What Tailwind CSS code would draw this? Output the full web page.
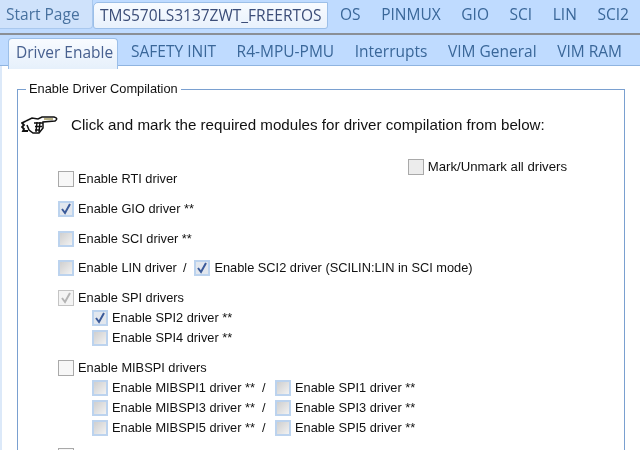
<!DOCTYPE html>
<html lang="en">
<head>
  <meta charset="UTF-8" />
  <title>HALCoGen</title>
  <script src="https://cdn.jsdelivr.net/npm/@tailwindcss/browser@4"></script>
</head>
<body class="bg-white w-[640px] h-[450px] overflow-hidden font-['Liberation_Sans',sans-serif] text-[12.8px] text-[#111] blur-[0.3px]">

  <!-- Main tabs -->
  <div class="h-[35px] bg-[#bfdbff] border-b-[2px] border-[#8a8f96] flex items-start font-['Open_Sans',sans-serif] text-[15.5px] text-[#3a6799]">
    <div class="h-[29px] w-[93px] pl-[6px] leading-[28px] bg-[#cfe2fb] rounded-br-[4px] border-r border-b border-[#a9c8ee] text-[#47719f]">Start Page</div>
    <div class="h-[27px] w-[235px] mt-[2px] pl-[6px] leading-[25px] bg-gradient-to-b from-[#f8fbff] to-[#e8f1fc] border border-[#9cbfe8] rounded-tl-[5px] rounded-b-[3px] text-[#3b4d78]">TMS570LS3137ZWT_FREERTOS</div>
    <div class="flex gap-[20.6px] pl-[12px] pt-[2px] leading-[25px]">
      <span>OS</span><span>PINMUX</span><span>GIO</span><span>SCI</span><span>LIN</span><span>SCI2</span>
    </div>
  </div>

  <!-- Sub tabs -->
  <div class="h-[31px] bg-[#bfdbff] border-b border-[#8fb4e0] flex items-start pl-[8px] font-['Open_Sans',sans-serif] text-[15.5px] text-[#3a6799]">
    <div class="h-[31px] w-[110px] mt-[3px] pl-[7px] leading-[26px] bg-gradient-to-b from-[#f8fbff] to-[#e6f0fb] border border-b-0 border-[#9cbfe8] rounded-t-[4px] text-[#47608f]">Driver Enable</div>
    <div class="flex gap-[20.6px] pl-[13px] pt-[3px] leading-[27px]">
      <span>SAFETY INIT</span><span>R4-MPU-PMU</span><span>Interrupts</span><span>VIM General</span><span>VIM RAM</span>
    </div>
  </div>

  <!-- Panel -->
  <div class="pl-[2px] pt-[16px] border-l-[2px] border-[#dce9f9]">
    <fieldset class="ml-[13px] w-[608px] min-w-0 h-[368px] overflow-hidden border border-[#7aa0d0] border-b-0 pl-[3px]">
      <legend class="ml-[5px] px-[3px] leading-[14px]">Enable Driver Compilation</legend>

      <div class="flex items-center h-[22px] mt-[18px]">
        <svg class="w-[38px] h-[18px]" viewBox="0 0 38 18" fill="none" stroke="#111">
          <!-- cuff -->
          <path d="M5 5 L1 7 L3 9 L1 11 L3 13 L2 15 L7 15" stroke-width="1.8"/>
          <!-- palm and index finger -->
          <path d="M5 5 L11 2 L17 3 L21 1 H33 Q38 2.5 34 5 L22 6 L22 12 L18 17 L12 17 L8 14 L6 9" fill="#fff" stroke-width="1.5"/>
          <!-- fingers -->
          <path d="M13 7 H22 M14 10.5 H21 M14 14 H19 M16 6 L15 16 M19 6 L18 16" stroke-width="1.4"/>
          <path d="M23 3 H32" stroke="#a89f6a" stroke-width="1.6"/>
        </svg>
        <span class="ml-[12px] text-[15.15px] whitespace-nowrap">Click and mark the required modules for driver compilation from below:</span>
      </div>

      <div class="flex justify-between pr-[57px]">
        <div class="flex-1 min-w-0 pl-[37px] pt-[33px]">
          <label class="flex items-center h-[20px]">
            <span class="w-[16px] h-[16px] border border-[#a9a9a9] bg-[#f7f7f7] mr-[4px]"></span>Enable RTI driver
          </label>
          <label class="flex items-center h-[20px] mt-[10px]">
            <span class="w-[16px] h-[16px] border-2 border-[#bcd3ee] bg-[#e2e7ee] mr-[4px] flex items-center justify-center">
              <svg class="w-[12px] h-[12px] shrink-0" viewBox="0 0 12 12" fill="none" stroke="#3a5a9a" stroke-width="2"><path d="M2 6 L5 10 L10 1"/></svg>
            </span>Enable GIO driver **
          </label>
          <label class="flex items-center h-[20px] mt-[9.5px]">
            <span class="w-[16px] h-[16px] border-2 border-[#bcd3ee] bg-gradient-to-br from-[#cfcfcf] to-[#f2f2f2] mr-[4px]"></span>Enable SCI driver **
          </label>
          <div class="flex items-center h-[20px] mt-[9.5px] w-max whitespace-nowrap">
            <span class="shrink-0 w-[16px] h-[16px] border-2 border-[#bcd3ee] bg-gradient-to-br from-[#cfcfcf] to-[#f2f2f2] mr-[4px]"></span>Enable LIN driver
            <span class="ml-[6px]">/</span>
            <span class="shrink-0 w-[16px] h-[16px] ml-[8px] border-2 border-[#bcd3ee] bg-[#e2e7ee] mr-[4px] flex items-center justify-center">
              <svg class="w-[12px] h-[12px] shrink-0" viewBox="0 0 12 12" fill="none" stroke="#3a5a9a" stroke-width="2"><path d="M2 6 L5 10 L10 1"/></svg>
            </span>Enable SCI2 driver (SCILIN:LIN in SCI mode)
          </div>
          <label class="flex items-center h-[20px] mt-[10px]">
            <span class="w-[16px] h-[16px] border border-[#c4c4c4] bg-[#f4f4f4] mr-[4px] flex items-center justify-center">
              <svg class="w-[12px] h-[12px] shrink-0" viewBox="0 0 12 12" fill="none" stroke="#b4b4b4" stroke-width="2"><path d="M2 6 L5 10 L10 1"/></svg>
            </span>Enable SPI drivers
          </label>
          <div class="pl-[34px]">
            <label class="flex items-center h-[20px]">
              <span class="w-[16px] h-[16px] border-2 border-[#bcd3ee] bg-[#e2e7ee] mr-[4px] flex items-center justify-center">
                <svg class="w-[12px] h-[12px] shrink-0" viewBox="0 0 12 12" fill="none" stroke="#3a5a9a" stroke-width="2"><path d="M2 6 L5 10 L10 1"/></svg>
              </span>Enable SPI2 driver **
            </label>
            <label class="flex items-center h-[20px]">
              <span class="w-[16px] h-[16px] border-2 border-[#bcd3ee] bg-gradient-to-br from-[#cfcfcf] to-[#f2f2f2] mr-[4px]"></span>Enable SPI4 driver **
            </label>
          </div>
          <label class="flex items-center h-[20px] mt-[10px]">
            <span class="w-[16px] h-[16px] border border-[#a9a9a9] bg-[#f7f7f7] mr-[4px]"></span>Enable MIBSPI drivers
          </label>
          <div class="pl-[34px]">
            <div class="grid grid-cols-[183px_auto] w-[340px]">
              <div class="flex items-center h-[20px] whitespace-pre"><span class="w-[16px] h-[16px] border-2 border-[#bcd3ee] bg-gradient-to-br from-[#cfcfcf] to-[#f2f2f2] mr-[4px]"></span>Enable MIBSPI1 driver **  /</div>
              <div class="flex items-center h-[20px]"><span class="w-[16px] h-[16px] border-2 border-[#bcd3ee] bg-gradient-to-br from-[#cfcfcf] to-[#f2f2f2] mr-[4px]"></span>Enable SPI1 driver **</div>
              <div class="flex items-center h-[20px] whitespace-pre"><span class="w-[16px] h-[16px] border-2 border-[#bcd3ee] bg-gradient-to-br from-[#cfcfcf] to-[#f2f2f2] mr-[4px]"></span>Enable MIBSPI3 driver **  /</div>
              <div class="flex items-center h-[20px]"><span class="w-[16px] h-[16px] border-2 border-[#bcd3ee] bg-gradient-to-br from-[#cfcfcf] to-[#f2f2f2] mr-[4px]"></span>Enable SPI3 driver **</div>
              <div class="flex items-center h-[20px] whitespace-pre"><span class="w-[16px] h-[16px] border-2 border-[#bcd3ee] bg-gradient-to-br from-[#cfcfcf] to-[#f2f2f2] mr-[4px]"></span>Enable MIBSPI5 driver **  /</div>
              <div class="flex items-center h-[20px]"><span class="w-[16px] h-[16px] border-2 border-[#bcd3ee] bg-gradient-to-br from-[#cfcfcf] to-[#f2f2f2] mr-[4px]"></span>Enable SPI5 driver **</div>
            </div>
          </div>
          <div class="mt-[10px] w-[16px] h-[16px] border border-[#a9a9a9] bg-[#f7f7f7]"></div>
        </div>
        <label class="flex items-center h-[20px] mt-[21px] whitespace-nowrap text-[13.2px] self-start">
          <span class="w-[16px] h-[16px] border border-[#a9a9a9] bg-[#ececec] mr-[4px]"></span>Mark/Unmark all drivers
        </label>
      </div>
    </fieldset>
  </div>

</body>
</html>
